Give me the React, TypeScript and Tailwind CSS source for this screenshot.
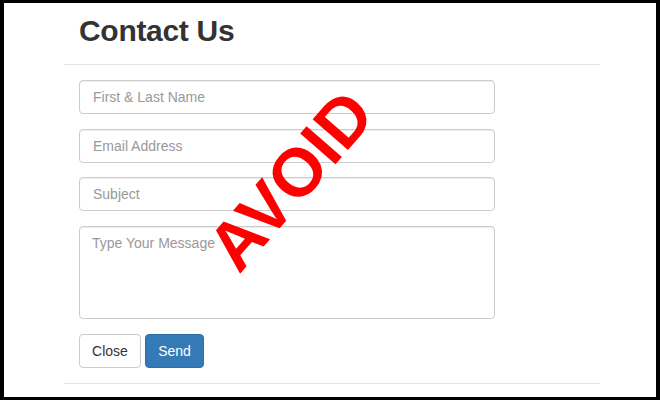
import React from 'react';

const fields = [
  { label: 'First & Last Name', gap: 'mb-[15px]' },
  { label: 'Email Address', gap: 'mb-[14px]' },
  { label: 'Subject', gap: 'mb-[15px]' },
];

export default function App() {
  return (
    <div className="w-[660px] h-[400px] bg-black pt-[3px] pl-[4px] pr-[4px] pb-[3px] font-['Liberation_Sans',Arial,sans-serif]">
      <div className="relative w-full h-full bg-white overflow-hidden">
        <div className="ml-[60px] w-[536px]">
          {/* Header */}
          <div className="h-[62px] border-b border-[#e5e5e5] px-[15px] pt-[10px]">
            <h4 className="text-[30px] leading-[36px] font-bold text-[#333] tracking-[-0.3px]">Contact Us</h4>
          </div>

          {/* Body */}
          <form className="p-[15px] flex flex-col">
            {fields.map(f => (
              <input
                key={f.label}
                type="text"
                placeholder={f.label}
                className={`${f.gap} w-[416px] h-[34px] pl-[13px] pr-[12px] border border-[#ccc] rounded-[4px] text-[14px] text-[#555] placeholder:text-[#999] shadow-[inset_0_1px_1px_rgba(0,0,0,0.075)] outline-none`}
              />
            ))}
            <textarea
              placeholder="Type Your Message"
              className="mb-[15px] w-[416px] h-[93px] pl-[12px] pr-[12px] py-[6px] border border-[#ccc] rounded-[4px] text-[14px] leading-[20px] text-[#555] placeholder:text-[#999] shadow-[inset_0_1px_1px_rgba(0,0,0,0.075)] outline-none resize-none"
            />
            <div className="flex gap-[4px]">
              <button type="button" className="h-[34px] w-[62px] border border-[#ccc] rounded-[4px] bg-white text-[14px] text-[#333]">
                Close
              </button>
              <button type="button" className="h-[34px] w-[59px] border border-[#2e6da4] rounded-[4px] bg-[#337ab7] text-[14px] text-white">
                Send
              </button>
            </div>
          </form>

          {/* Footer line */}
          <div className="border-t border-[#e5e5e5]" />
        </div>

        {/* Stamp overlay */}
        <span className="absolute left-[286px] top-[177px] -translate-x-1/2 -translate-y-1/2 -rotate-[49deg] text-[68px] leading-none font-bold text-[#ff0000] whitespace-nowrap pointer-events-none">
          AVOID
        </span>
      </div>
    </div>
  );
}
